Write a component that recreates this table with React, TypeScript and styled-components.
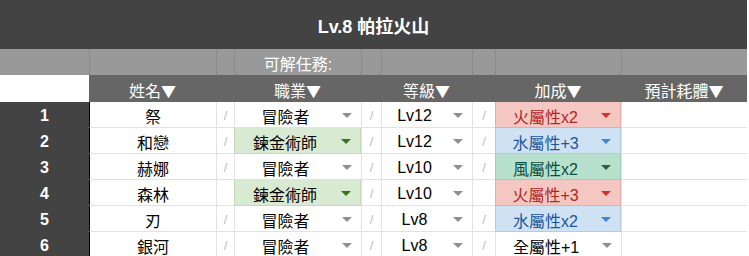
import React from 'react';
import styled, { createGlobalStyle, css } from 'styled-components';

const GlobalStyle = createGlobalStyle`
  html, body {
    margin: 0;
    padding: 0;
    background: #fff;
    overflow: hidden;
  }
  body {
    font-family: 'Liberation Sans', 'Noto Sans CJK TC', sans-serif;
  }
`;

type Tone = 'plain' | 'green' | 'fire' | 'water' | 'wind';

const tones: Record<Tone, { bg: string; border: string; text: string; arrow: string }> = {
  plain: { bg: '#ffffff', border: '#e2e2e2', text: '#000000', arrow: '#8f8f8f' },
  green: { bg: '#d9ead3', border: '#c3dbb9', text: '#000000', arrow: '#38761d' },
  fire: { bg: '#f4c7c3', border: '#e3aca7', text: '#b3261e', arrow: '#d93025' },
  water: { bg: '#cfe2f3', border: '#b1cbe3', text: '#1c56a0', arrow: '#3d85d6' },
  wind: { bg: '#b7e1cd', border: '#9fcdb6', text: '#0d4f3c', arrow: '#2f5e48' },
};

const Sheet = styled.div`
  display: grid;
  grid-template-columns: 89px 127px 18px 127px 20px 91px 23px 126px 126px;
  grid-template-rows: 49px 26px 27px repeat(6, 26px);
  width: 747px;
  font-size: 16px;
  color: #000;
`;

const TitleBar = styled.div`
  grid-column: 1 / -1;
  background: #434343;
  color: #fff;
  font-size: 18px;
  font-weight: bold;
  display: flex;
  align-items: center;
  justify-content: center;
  padding-top: 1px;
  box-sizing: border-box;
`;

const GroupCell = styled.div<{ $first?: boolean }>`
  background: #999999;
  color: #fff;
  display: flex;
  align-items: center;
  justify-content: center;
  box-sizing: border-box;
  border-left: ${(p) => (p.$first ? 'none' : '1px solid #8a8a8a')};
  padding-top: 2px;
`;

const HeadCell = styled.div<{ $blank?: boolean }>`
  background: ${(p) => (p.$blank ? '#ffffff' : '#666666')};
  color: #fff;
  display: flex;
  align-items: center;
  justify-content: center;
  padding-top: 3px;
  box-sizing: border-box;
`;

const Sort = styled.span`
  font-family: 'Noto Sans CJK TC', sans-serif;
  font-size: 15px;
`;

const RowNum = styled.div`
  background: #434343;
  color: #fff;
  font-weight: bold;
  display: flex;
  align-items: center;
  justify-content: center;
  padding-top: 1px;
  box-sizing: border-box;
`;

const Cell = styled.div<{ $edge?: boolean }>`
  background: #fff;
  box-sizing: border-box;
  border-left: 1px solid ${(p) => (p.$edge ? '#000' : '#e2e2e2')};
  border-bottom: 1px solid #e2e2e2;
  display: flex;
  align-items: center;
  justify-content: center;
  padding-top: 2px;
`;

const Slash = styled(Cell)`
  color: #bcbcbc;
  font-size: 13px;
`;

const Chip = styled.div<{ $tone: Tone }>`
  position: relative;
  box-sizing: border-box;
  display: flex;
  align-items: center;
  justify-content: center;
  padding: 2px 25px 0 0;
  ${({ $tone }) => css`
    background: ${tones[$tone].bg};
    color: ${tones[$tone].text};
    border-left: 1px solid ${$tone === 'plain' ? '#e2e2e2' : tones[$tone].border};
    border-bottom: 1px solid ${tones[$tone].border};
    border-right: ${$tone === 'plain' ? 'none' : `1px solid ${tones[$tone].border}`};
  `}
`;

const Arrow = styled.span<{ $tone: Tone }>`
  position: absolute;
  right: 9px;
  top: 50%;
  margin-top: -2px;
  width: 0;
  height: 0;
  border-left: 5px solid transparent;
  border-right: 5px solid transparent;
  border-top: 5px solid ${(p) => tones[p.$tone].arrow};
`;

type Row = {
  name: string;
  job: string;
  level: string;
  bonus: string;
  bonusTone: Tone;
  slashes: [boolean, boolean, boolean];
};

const rows: Row[] = [
  { name: '祭', job: '冒險者', level: 'Lv12', bonus: '火屬性x2', bonusTone: 'fire', slashes: [true, true, true] },
  { name: '和戀', job: '鍊金術師', level: 'Lv12', bonus: '水屬性+3', bonusTone: 'water', slashes: [true, true, true] },
  { name: '赫娜', job: '冒險者', level: 'Lv10', bonus: '風屬性x2', bonusTone: 'wind', slashes: [true, true, true] },
  { name: '森林', job: '鍊金術師', level: 'Lv10', bonus: '火屬性+3', bonusTone: 'fire', slashes: [false, true, false] },
  { name: '刃', job: '冒險者', level: 'Lv8', bonus: '水屬性x2', bonusTone: 'water', slashes: [true, true, true] },
  { name: '銀河', job: '冒險者', level: 'Lv8', bonus: '全屬性+1', bonusTone: 'plain', slashes: [true, true, true] },
];

const headers = ['姓名', '', '職業', '', '等級', '', '加成', '預計耗體'];

function Dropdown({ tone, label }: { tone: Tone; label: string }) {
  return (
    <Chip $tone={tone}>
      {label}
      <Arrow $tone={tone} />
    </Chip>
  );
}

export default function App() {
  return (
    <>
      <GlobalStyle />
      <Sheet>
        <TitleBar>Lv.8 帕拉火山</TitleBar>

        <GroupCell $first />
        <GroupCell />
        <GroupCell />
        <GroupCell>可解任務:</GroupCell>
        <GroupCell />
        <GroupCell />
        <GroupCell />
        <GroupCell />
        <GroupCell />

        <HeadCell $blank />
        {headers.map((h, i) => (
          <HeadCell key={i}>
            {h}
            {h && <Sort>▼</Sort>}
          </HeadCell>
        ))}

        {rows.map((row, i) => (
          <React.Fragment key={row.name}>
            <RowNum>{i + 1}</RowNum>
            <Cell $edge>{row.name}</Cell>
            <Slash>{row.slashes[0] ? '/' : ''}</Slash>
            <Dropdown tone={row.job === '鍊金術師' ? 'green' : 'plain'} label={row.job} />
            <Slash>{row.slashes[1] ? '/' : ''}</Slash>
            <Dropdown tone="plain" label={row.level} />
            <Slash>{row.slashes[2] ? '/' : ''}</Slash>
            <Dropdown tone={row.bonusTone} label={row.bonus} />
            <Cell />
          </React.Fragment>
        ))}
      </Sheet>
    </>
  );
}
